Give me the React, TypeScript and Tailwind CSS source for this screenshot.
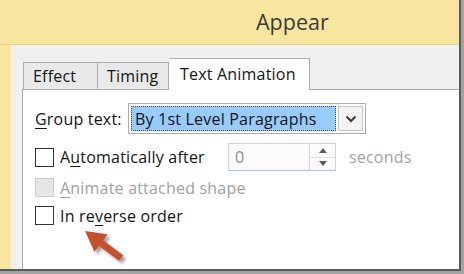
import React from "react";

const font = { fontFamily: '"Open Sans", "Noto Sans", "Liberation Sans", sans-serif' };

function Check({ disabled }: { disabled?: boolean }) {
  return (
    <div
      className={
        "w-[19px] h-[19px] shrink-0 border " +
        (disabled ? "bg-[#e6e6e6] border-[#cccccc]" : "bg-white border-[#333333]")
      }
    />
  );
}

export default function App() {
  return (
    <div className="w-[464px] h-[274px] bg-[#a3a3a3] relative" style={font}>
      <div className="w-[461px] h-[271px] bg-[#595959]">
        <div className="w-[459px] h-[269px] overflow-hidden flex flex-col">
          {/* Title bar */}
          <div className="h-[45px] shrink-0 bg-[#f8e6a0] border-b border-[#e6d08a] flex items-center pl-[256px]">
            <span className="text-[21.5px] text-[#3a3a3a] leading-none">Appear</span>
          </div>
          {/* Body */}
          <div className="flex-1 flex min-h-0">
            <div className="w-[12px] shrink-0 bg-[#f8e6a0] border-r border-[#fbf2cf]" />
            <div className="flex-1 bg-[#f0f0f0] flex flex-col pl-[10px] pt-[13px] min-w-0">
              {/* Tabs */}
              <div className="h-[31px] flex items-end shrink-0 pl-[1px] text-[16px] tracking-[0.2px] text-[#141414]">
                <div className="w-[75px] h-[27px] border border-b-0 border-[#acacac] bg-[#e9e9e9] flex items-center pl-[9px]">
                  Effect
                </div>
                <div className="w-[71px] h-[27px] border border-l-0 border-b-0 border-[#acacac] bg-[#e9e9e9] flex items-center pl-[9px]">
                  Timing
                </div>
                <div className="w-[141px] h-[32px] -mb-[1px] relative z-10 border border-l-0 border-b-0 border-[#acacac] bg-white flex items-start pl-[11px] pt-[3px] whitespace-nowrap">
                  Text Animation
                </div>
              </div>
              {/* Panel */}
              <div className="flex-1 bg-white border-l border-t border-[#acacac] pl-[12px] pt-[13px] flex flex-col text-[16px] tracking-[0.2px] text-[#141414]">
                {/* Group text */}
                <div className="flex items-center h-[31px]">
                  <div className="w-[93px] shrink-0 whitespace-nowrap">
                    <span className="underline underline-offset-[3px] decoration-1">G</span>roup text:
                  </div>
                  <div className="w-[238px] h-[31px] border border-[#acacac] bg-white p-[2px] flex gap-[2px]">
                    <div className="w-[205px] h-full bg-[#99cbfb] border border-dotted border-[#4a4a4a] flex items-center pl-[3px] whitespace-nowrap overflow-hidden">
                      By 1st Level Paragraphs
                    </div>
                    <div className="flex-1 h-full border border-[#c3c3c3] bg-[#f3f3f3] flex items-center justify-center">
                      <svg width="12" height="8" viewBox="0 0 12 8">
                        <path d="M1.5 1.5 L6 6 L10.5 1.5" fill="none" stroke="#3a3a3a" strokeWidth="2" />
                      </svg>
                    </div>
                  </div>
                </div>
                {/* Automatically after */}
                <div className="flex items-center h-[28px] mt-[9px]">
                  <div className="w-[193px] shrink-0 flex items-center gap-[6px] whitespace-nowrap">
                    <Check />
                    <span>
                      A<span className="underline underline-offset-[3px] decoration-1">u</span>tomatically after
                    </span>
                  </div>
                  <div className="w-[108px] h-[28px] border border-[#c9d5e3] border-b-[#9fc3ea] bg-[#fbfbfb] flex">
                    <div className="flex-1 flex items-center pl-[6px] text-[#8f8f8f]">0</div>
                    <div className="w-[26px] border-l border-[#d6d6d6] flex flex-col">
                      <div className="flex-1 flex items-center justify-center border-b border-[#e0e0e0]">
                        <svg width="8" height="5" viewBox="0 0 8 5">
                          <path d="M0 5 L4 0 L8 5 Z" fill="#5a5a5a" />
                        </svg>
                      </div>
                      <div className="flex-1 flex items-center justify-center">
                        <svg width="8" height="5" viewBox="0 0 8 5">
                          <path d="M0 0 L4 5 L8 0 Z" fill="#5a5a5a" />
                        </svg>
                      </div>
                    </div>
                  </div>
                  <span className="ml-[13px] text-[#a3a3a3]">seconds</span>
                </div>
                {/* Animate attached shape */}
                <div className="flex items-center gap-[6px] h-[19px] mt-[7px] text-[#a0a0a0] whitespace-nowrap">
                  <Check disabled />
                  <span>
                    <span className="underline underline-offset-[3px] decoration-1">A</span>nimate attached shape
                  </span>
                </div>
                {/* In reverse order */}
                <div className="flex items-center gap-[6px] h-[19px] mt-[9px] whitespace-nowrap">
                  <Check />
                  <span>
                    In re<span className="underline underline-offset-[3px] decoration-1">v</span>erse order
                  </span>
                </div>
              </div>
            </div>
          </div>
        </div>
      </div>
      {/* Annotation arrow */}
      <svg className="absolute inset-0 pointer-events-none" width="464" height="274" viewBox="0 0 464 274">
        <defs>
          <filter id="sh" x="-50%" y="-50%" width="200%" height="200%">
            <feGaussianBlur stdDeviation="1.6" />
          </filter>
        </defs>
        <polygon
          points="88,234 110.6,237.2 106.1,243.2 126.1,258.2 121.9,263.8 101.9,248.8 97.4,254.8"
          fill="#7a7a7a"
          opacity="0.7"
          filter="url(#sh)"
        />
        <polygon
          points="85,231 107.6,234.2 103.1,240.2 123.1,255.2 118.9,260.8 98.9,245.8 94.4,251.8"
          fill="#c4502c"
        />
      </svg>
    </div>
  );
}
